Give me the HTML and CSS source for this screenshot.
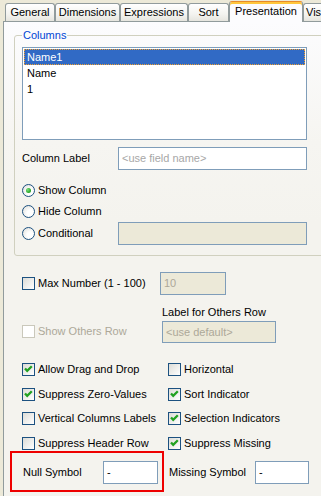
FILE: index.html
```html
<!DOCTYPE html>
<html lang="en">
<head>
    <meta charset="UTF-8">
    <title>Chart Properties - Presentation</title>
    <link rel="stylesheet" href="styles.css">
</head>
<body>
    <div class="tabs">
        <div class="tab tab-general">General</div>
        <div class="tab tab-dimensions">Dimensions</div>
        <div class="tab tab-expressions">Expressions</div>
        <div class="tab tab-sort">Sort</div>
        <div class="tab tab-presentation active">Presentation</div>
        <div class="tab tab-vis">Vis</div>
    </div>

    <div class="panel">
        <fieldset class="group">
            <legend>Columns</legend>
            <div class="listbox">
                <div class="item selected">Name1</div>
                <div class="item">Name</div>
                <div class="item">1</div>
            </div>

            <div class="field-row">
                <span class="field-label">Column Label</span>
                <div class="input wide placeholder">&lt;use field name&gt;</div>
            </div>

            <div class="radio-row first">
                <span class="radio checked"></span>
                <span>Show Column</span>
            </div>
            <div class="radio-row">
                <span class="radio"></span>
                <span>Hide Column</span>
            </div>
            <div class="radio-row cond">
                <span class="radio"></span>
                <span class="field-label short">Conditional</span>
                <div class="input wide disabled"></div>
            </div>
        </fieldset>

        <div class="content">
            <div class="max-row">
                <div class="check-item max-label">
                    <span class="checkbox"></span>
                    <span>Max Number (1 - 100)</span>
                </div>
                <div class="input small disabled">10</div>
            </div>

            <div class="others">
                <div class="check-item disabled-item">
                    <span class="checkbox off"></span>
                    <span>Show Others Row</span>
                </div>
                <div class="others-right">
                    <div class="others-label">Label for Others Row</div>
                    <div class="input medium disabled">&lt;use default&gt;</div>
                </div>
            </div>

            <div class="check-grid">
                <div class="check-item">
                    <span class="checkbox"><svg viewBox="0 0 11 11" width="11" height="11"><path d="M2 4.5l2.2 2.3L8.8 2.2"/></svg></span>
                    <span>Allow Drag and Drop</span>
                </div>
                <div class="check-item">
                    <span class="checkbox"></span>
                    <span>Horizontal</span>
                </div>
                <div class="check-item">
                    <span class="checkbox"><svg viewBox="0 0 11 11" width="11" height="11"><path d="M2 4.5l2.2 2.3L8.8 2.2"/></svg></span>
                    <span>Suppress Zero-Values</span>
                </div>
                <div class="check-item">
                    <span class="checkbox"><svg viewBox="0 0 11 11" width="11" height="11"><path d="M2 4.5l2.2 2.3L8.8 2.2"/></svg></span>
                    <span>Sort Indicator</span>
                </div>
                <div class="check-item">
                    <span class="checkbox"></span>
                    <span>Vertical Columns Labels</span>
                </div>
                <div class="check-item">
                    <span class="checkbox"><svg viewBox="0 0 11 11" width="11" height="11"><path d="M2 4.5l2.2 2.3L8.8 2.2"/></svg></span>
                    <span>Selection Indicators</span>
                </div>
                <div class="check-item">
                    <span class="checkbox"></span>
                    <span>Suppress Header Row</span>
                </div>
                <div class="check-item">
                    <span class="checkbox"><svg viewBox="0 0 11 11" width="11" height="11"><path d="M2 4.5l2.2 2.3L8.8 2.2"/></svg></span>
                    <span>Suppress Missing</span>
                </div>
            </div>

            <div class="symbol-row">
                <div class="highlight">
                    <span class="symbol-label">Null Symbol</span>
                    <div class="input symbol">-</div>
                </div>
                <span class="symbol-label missing">Missing Symbol</span>
                <div class="input symbol narrow">-</div>
            </div>
        </div>
    </div>
</body>
</html>
```

FILE: styles.css
```css
* {
    margin: 0;
    padding: 0;
    box-sizing: border-box;
}

html, body {
    width: 321px;
    height: 496px;
    overflow: hidden;
}

body {
    font-family: "Liberation Sans", Arial, sans-serif;
    font-size: 11px;
    line-height: 13px;
    color: #000;
    background: #ece9d8;
}

/* tab strip */
.tabs {
    display: flex;
    align-items: flex-end;
    height: 22px;
    padding-left: 5px;
    margin-bottom: -1px;
    position: relative;
    z-index: 1;
    white-space: nowrap;
    overflow: hidden;
}

.tab {
    height: 18px;
    margin-bottom: 1px;
    border: 1px solid #919b9c;
    border-bottom: none;
    border-radius: 3px 3px 0 0;
    background: linear-gradient(#ffffff, #f3f3ef 60%, #e6e5de);
    text-align: center;
    line-height: 17px;
    flex-shrink: 0;
    overflow: hidden;
}

.tab-general { width: 50px; }
.tab-dimensions { width: 65px; }
.tab-expressions { width: 68px; }
.tab-sort { width: 41px; }
.tab-vis { width: 18px; text-align: left; padding-left: 2px; border-right: none; border-radius: 3px 0 0 0; }

.tab.active {
    width: 74px;
    height: 21px;
    margin-bottom: 0;
    background: #fcfcfe;
    border-top: 1px solid #e68b2c;
    box-shadow: inset 0 2px 0 #ffc73c;
    line-height: 19px;
}

/* page body of the dialog, cut off at the window's right edge */
.panel {
    width: 318px;
    height: 475px;
    margin-left: 3px;
    overflow: hidden;
    border-left: 1px solid #919b9c;
    border-top: 1px solid #919b9c;
    background: linear-gradient(#fcfcfe, #f6f5f1 120px, #f4f3ee 200px);
}

.group {
    margin: 7px 0 0 10px;
    width: 330px;
    padding: 0 7px 11px;
    border: 1px solid #d0d0bf;
    border-radius: 3px;
}

.group legend {
    color: #0046d5;
    padding: 0 1px;
    margin-left: 0;
    line-height: 13px;
}

.listbox {
    margin-top: 5px;
    width: 285px;
    height: 93px;
    border: 1px solid #7f9db9;
    background: #fff;
    padding: 1px;
}

.item {
    height: 16px;
    line-height: 16px;
    padding-left: 3px;
}

.item.selected {
    background: #316ac5;
    color: #fff;
    outline: 1px dotted #f0a030;
    outline-offset: -1px;
}

.input {
    height: 23px;
    border: 1px solid #7f9db9;
    background: #fff;
    line-height: 21px;
    padding-left: 3px;
    flex-shrink: 0;
}

.input.placeholder {
    color: #a7a7a7;
}

.input.disabled {
    background: #ece9d8;
    color: #aca899;
}

.input.wide { width: 189px; }
.input.small { width: 66px; }
.input.medium { width: 114px; height: 22px; }

.field-row {
    display: flex;
    align-items: center;
    margin-top: 7px;
}

.field-label {
    width: 96px;
    flex-shrink: 0;
}

.field-label.short {
    width: 80px;
}

.radio-row {
    display: flex;
    align-items: center;
    height: 21px;
}

.radio-row.first {
    margin-top: 10px;
}

.radio-row.cond {
    height: 22px;
}

.radio {
    position: relative;
    width: 13px;
    height: 13px;
    margin-right: 3px;
    border: 1px solid #1c5180;
    border-radius: 50%;
    background: radial-gradient(circle at 65% 65%, #ffffff 30%, #dcdcd7);
    flex-shrink: 0;
}

.radio.checked::after {
    content: "";
    position: absolute;
    left: 3px;
    top: 3px;
    width: 5px;
    height: 5px;
    border-radius: 50%;
    background: radial-gradient(circle at 35% 35%, #7be07b, #21a121 70%);
}

/* below the group box */
.content {
    padding-left: 18px;
}

.check-item {
    display: flex;
    align-items: center;
    white-space: nowrap;
}

.checkbox {
    width: 13px;
    height: 13px;
    margin-right: 3px;
    border: 1px solid #1c5180;
    background: linear-gradient(135deg, #dcdcd7, #ffffff);
    flex-shrink: 0;
}

.checkbox svg {
    display: block;
    fill: none;
    stroke: #21a121;
    stroke-width: 2.3;
}

.checkbox.off {
    border-color: #cac8bb;
    background: #fff;
}

.disabled-item {
    color: #aca899;
}

.max-row {
    display: flex;
    align-items: center;
    margin-top: 16px;
    height: 23px;
}

.max-label {
    width: 138px;
}

.others {
    display: flex;
    margin-top: 11px;
}

.others .disabled-item {
    width: 140px;
    margin-top: 19px;
    align-self: flex-start;
}

.others-label {
    margin-bottom: 2px;
}

.check-grid {
    display: grid;
    grid-template-columns: 146px 1fr;
    grid-auto-rows: 15px;
    row-gap: 9.6px;
    margin-top: 19px;
}

.symbol-row {
    display: flex;
    align-items: center;
    margin-top: 0;
}

.highlight {
    display: flex;
    align-items: center;
    width: 154px;
    height: 41px;
    margin-left: -12px;
    padding: 2px 0 0 11px;
    border: 2px solid #ee0000;
}

.symbol-label {
    width: 80px;
    flex-shrink: 0;
}

.symbol-label.missing {
    width: 86px;
    margin-left: 5px;
    padding-top: 2px;
}

.input.symbol {
    width: 55px;
}

.input.narrow {
    width: 54px;
    margin-top: 2px;
}
```
